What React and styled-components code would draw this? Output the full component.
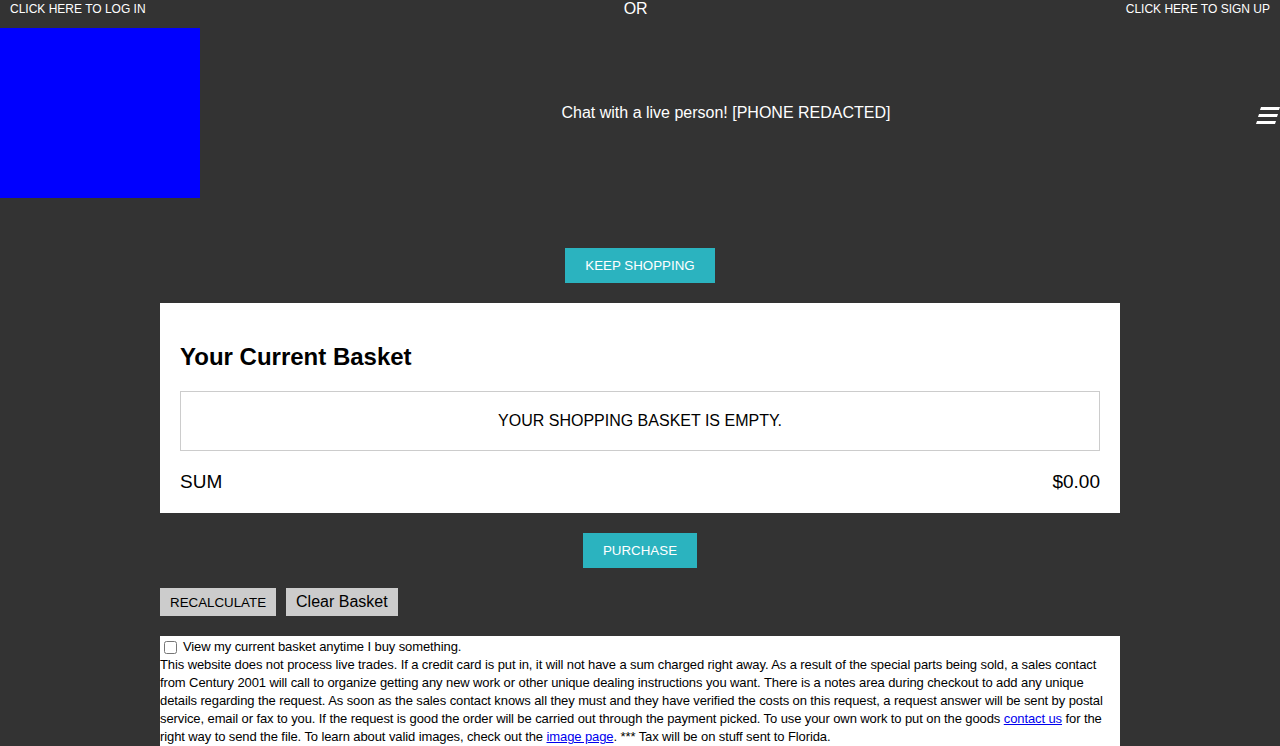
import React from "react";
import styled, { createGlobalStyle } from "styled-components";

const Global = createGlobalStyle`
  html, body { margin: 0; padding: 0; background: #333333; }
  body { font-family: "Liberation Sans", Arial, sans-serif; color: #000; }
  * { box-sizing: border-box; }
`;

const Page = styled.div`
  min-height: 746px;
  background: #333333;
  display: flex;
  flex-direction: column;
`;

const TopBar = styled.div`
  height: 28px;
  display: flex;
  justify-content: space-between;
  align-items: flex-start;
  padding: 0 10px;
  color: #fff;
`;

const TopLink = styled.a`
  font-size: 12px;
  line-height: 14px;
  padding-top: 2px;
  color: #fff;
  text-decoration: none;
  text-transform: uppercase;
`;

const Or = styled.span`
  font-size: 16px;
  line-height: 18px;
  color: #fff;
`;

const Header = styled.header`
  height: 170px;
  display: flex;
  align-items: center;
`;

const Logo = styled.div`
  width: 200px;
  height: 170px;
  background: #0000ff;
  flex-shrink: 0;
`;

const Chat = styled.div`
  flex: 1;
  text-align: center;
  color: #fff;
  font-size: 16px;
  line-height: 18px;
`;

const MenuButton = styled.button`
  width: 28px;
  height: 24px;
  padding: 0;
  border: 0;
  background: transparent;
  display: flex;
  align-items: center;
  justify-content: flex-end;
  margin-top: 6px;
`;

const Main = styled.main`
  width: 960px;
  margin: 0 auto;
  display: flex;
  flex-direction: column;
  align-items: center;
`;

const TealButton = styled.button`
  background: #2bb3bf;
  color: #fff;
  border: 0;
  height: 35px;
  padding: 0 20px;
  font-family: "Liberation Sans", Arial, sans-serif;
  font-size: 13.33px;
  text-transform: uppercase;
  margin-top: ${(p) => p.$mt || 20}px;
  cursor: pointer;
`;

const Card = styled.section`
  width: 960px;
  background: #fff;
  margin-top: 20px;
  padding: 20px 20px 20px;
`;

const Title = styled.h2`
  margin: 20px 0 20px;
  font-size: 24px;
  line-height: 28px;
  font-weight: bold;
`;

const EmptyBox = styled.div`
  height: 60px;
  border: 1px solid #cccccc;
  display: flex;
  align-items: center;
  justify-content: center;
  font-size: 16px;
  text-transform: uppercase;
`;

const SumRow = styled.div`
  margin-top: 20px;
  display: flex;
  justify-content: space-between;
  font-size: 19px;
  line-height: 22px;
`;

const ButtonRow = styled.div`
  align-self: stretch;
  display: flex;
  gap: 10px;
  margin-top: 20px;
`;

const GrayButton = styled.button`
  background: #cccccc;
  border: 0;
  height: 28px;
  padding: 0 10px;
  font-family: "Liberation Sans", Arial, sans-serif;
  font-size: ${(p) => p.$fs || 13.33}px;
  color: #000;
  cursor: pointer;
`;

const Notice = styled.div`
  align-self: stretch;
  background: #fff;
  margin-top: 20px;
  padding-top: 2px;
  font-size: 13px;
  line-height: 18px;
  letter-spacing: -0.1px;
  padding-bottom: 10px;
`;

const CheckLabel = styled.label`
  display: flex;
  align-items: center;
  height: 18px;
  input {
    margin: 0 6px 0 4px;
    width: 13px;
    height: 13px;
  }
`;

const Paragraph = styled.p`
  margin: 0;
  a { color: #0000ee; }
`;

export default function App() {
  return (
    <Page>
      <Global />
      <TopBar>
        <TopLink href="#">Click here to log in</TopLink>
        <Or>OR</Or>
        <TopLink href="#">Click here to sign up</TopLink>
      </TopBar>
      <Header>
        <Logo />
        <Chat>Chat with a live person! [PHONE REDACTED]</Chat>
        <MenuButton aria-label="menu">
          <svg width="24" height="18" viewBox="0 0 24 18">
            <polygon points="5,0 24,0 23,3 4,3" fill="#fff" />
            <polygon points="3,7 22,7 21,10 2,10" fill="#fff" />
            <polygon points="1,14 20,14 19,17 0,17" fill="#fff" />
          </svg>
        </MenuButton>
      </Header>
      <Main>
        <TealButton $mt={50}>Keep shopping</TealButton>
        <Card>
          <Title>Your Current Basket</Title>
          <EmptyBox>Your shopping basket is empty.</EmptyBox>
          <SumRow>
            <span>SUM</span>
            <span>$0.00</span>
          </SumRow>
        </Card>
        <TealButton>Purchase</TealButton>
        <ButtonRow>
          <GrayButton>RECALCULATE</GrayButton>
          <GrayButton $fs={16}>Clear Basket</GrayButton>
        </ButtonRow>
        <Notice>
          <CheckLabel>
            <input type="checkbox" />
            View my current basket anytime I buy something.
          </CheckLabel>
          <Paragraph>
            This website does not process live trades. If a credit card is put in, it will not have a sum charged right away. As a result of the special parts being sold, a sales contact from Century 2001 will call to organize getting any new work or other unique dealing instructions you want. There is a notes area during checkout to add any unique details regarding the request. As soon as the sales contact knows all they must and they have verified the costs on this request, a request answer will be sent by postal service, email or fax to you. If the request is good the order will be carried out through the payment picked. To use your own work to put on the goods <a href="#">contact us</a> for the right way to send the file. To learn about valid images, check out the <a href="#">image page</a>. *** Tax will be on stuff sent to Florida.
          </Paragraph>
        </Notice>
      </Main>
    </Page>
  );
}
